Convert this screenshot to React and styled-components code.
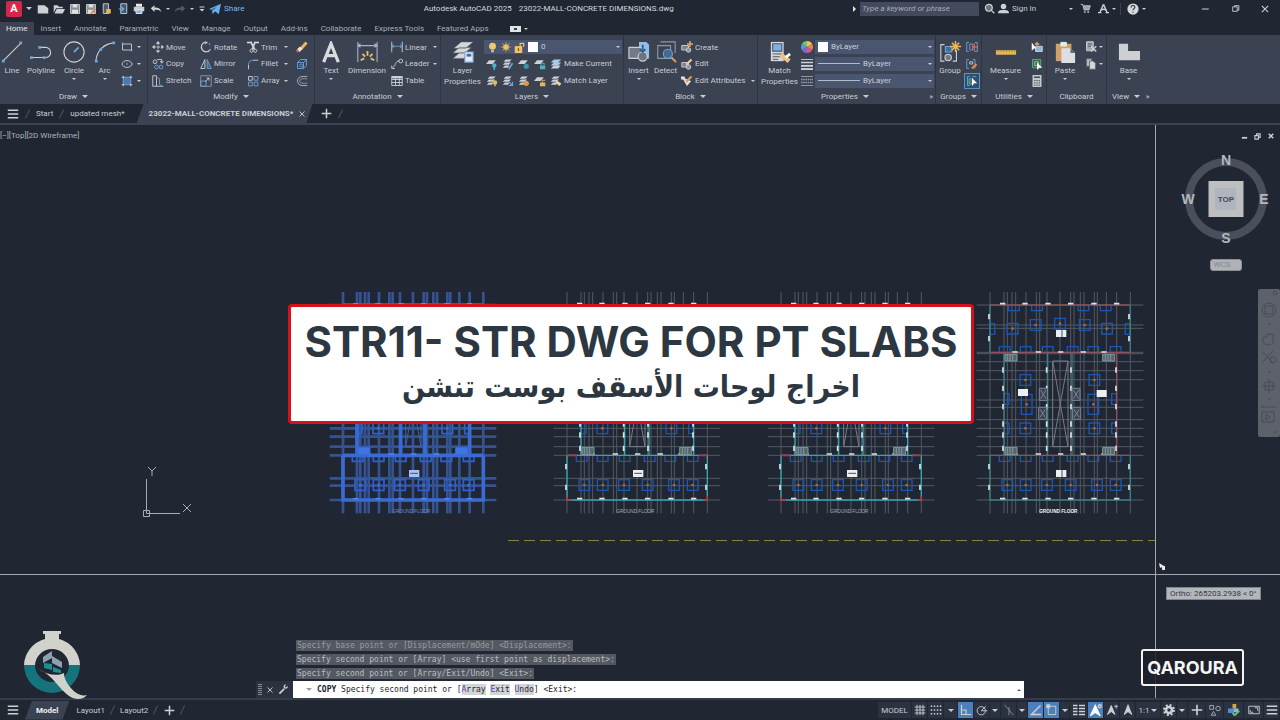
import React, { Component } from 'react'
import styled, { createGlobalStyle, css } from 'styled-components'

const colorBack = '#202732'
const colorPanel = '#3b4252'
const colorField = '#4a5670'
const colorText = '#c9cdd5'
const colorLight = '#cdd0d4'
const colorBlue = '#6ea4d8'
const colorYellow = '#e8b95c'
const fontPrimary = "Roboto, 'Noto Sans', sans-serif"
const fontHeading = "Inter, 'Open Sans', sans-serif"
const fontCommand = "'DejaVu Sans Mono', 'Liberation Mono', monospace"

const GlobalStyle = createGlobalStyle`
  * {
    box-sizing: border-box;
  }
  body {
    margin: 0;
    background: ${colorBack};
    color: ${colorText};
    font-family: ${fontPrimary};
    font-size: 8px;
    line-height: 11px;
  }
  button, input, select {
    margin: 0;
    padding: 0;
    border: 0;
    background: none;
    color: inherit;
    font: inherit;
  }
`

const Page = styled.div`
  display: flex;
  flex-direction: column;
  min-height: 100vh;
  overflow: hidden;
`

/* ---------- icons ---------- */

const Svg = styled.svg`
  display: block;
  flex: none;
  width: ${p => p.$size}px;
  height: ${p => p.$size}px;
  fill: none;
  stroke: ${colorLight};
  stroke-width: 1.2;
`

const sheets = (
  <g fill={colorLight} stroke='none'>
    <path d='M5 2h8l-3 3H2z' />
    <path d='M4 6h8l-3 3H1z' />
    <path d='M4 10h6l-2 3H1z' />
  </g>
)

const sheet = <path d='M4 3h9l-4 5H0z' fill={colorLight} stroke='none' />

const smallIcons = {
  file: <path d='M1 3h9l5 4v7H1z' fill={colorLight} stroke='none' />,
  open: (
    <g fill={colorLight} stroke='none'>
      <path d='M1 3h5l2 2h5v2H4l-3 6z' />
      <path d='M5 8h11l-3 6H2z' />
    </g>
  ),
  save: (
    <g>
      <path d='M2 2h12v12H2z' fill='#8b9098' />
      <path d='M5 2h6v4H5zM4 9h8v5H4z' fill='#dfe1e4' stroke='none' />
    </g>
  ),
  saveAs: (
    <g>
      <path d='M2 2h12v12H2z' fill='#8b9098' />
      <path d='M5 2h6v4H5zM4 9h8v5H4z' fill='#dfe1e4' stroke='none' />
      <path d='M8 14l6-6' stroke='#e08a4c' strokeWidth='2.4' />
    </g>
  ),
  webOpen: (
    <g>
      <path d='M3 1h7v13H3z' fill='#555b66' />
      <path d='M7 8h6v6H7z' fill={colorYellow} stroke='none' />
    </g>
  ),
  webSave: (
    <g>
      <path d='M5 1h8v13H5z' fill='#3c5878' />
      <path d='M2 8h7M6 5l3 3-3 3' stroke={colorBlue} strokeWidth='1.6' />
    </g>
  ),
  print: (
    <g>
      <path d='M4 1h8v4H4z' fill='#e6e8ea' stroke='none' />
      <path d='M1 5h14v6H1z' fill='#c9ccd1' stroke='none' />
      <path d='M4 9h8v5H4z' fill='#8fb8dc' stroke='#e6e8ea' />
    </g>
  ),
  undo: (
    <path
      d='M1 7l5-4v3c5 0 8 1 9 6-2-3-5-3-9-3v3z'
      fill={colorLight}
      stroke='none'
    />
  ),
  redo: (
    <path
      d='M15 7l-5-4v3c-5 0-8 1-9 6 2-3 5-3 9-3v3z'
      fill='#555c68'
      stroke='none'
    />
  ),
  overflow: (
    <g>
      <path d='M3 4h10' strokeWidth='2' />
      <path d='M3 8h10l-5 5z' fill={colorLight} stroke='none' />
    </g>
  ),
  plane: (
    <path
      d='M0 8L16 1l-3 14-5-4-3 4-1-5 7-5-8 4z'
      fill='#63b3ea'
      stroke='none'
    />
  ),
  search: (
    <g strokeWidth='1.8'>
      <circle cx='7' cy='7' r='5' fill='#6d7480' />
      <path d='M10 10l5 5' />
    </g>
  ),
  user: (
    <g fill={colorLight} stroke='none'>
      <circle cx='8' cy='5' r='4' />
      <path d='M0 15c0-5 4-5 8-5s8 0 8 5z' />
    </g>
  ),
  cart: (
    <g>
      <path d='M1 2h3l2 8h7l2-6H5' fill='#9aa0aa' />
      <circle cx='7' cy='13' r='1' />
      <circle cx='12' cy='13' r='1' />
    </g>
  ),
  apps: (
    <g strokeWidth='2'>
      <path d='M8 2l5 11M8 2L3 13M4 11c3-3 5-3 8 0' />
      <path d='M0 14h5M11 14h5' />
    </g>
  ),
  help: (
    <g>
      <circle cx='8' cy='8' r='7.5' fill='#d5d7da' stroke='none' />
      <path d='M5.500 6c0-4 5-3 5-.5 0 2-2.500 2-2.500 4M8 11.500v1.500' stroke='#2a303c' strokeWidth='1.500' />
    </g>
  ),
  minimize: <path d='M3 8h11' strokeWidth='1.600' />,
  restore: <path d='M3 5h8v8H3zM6 5V3h8v8h-3' strokeWidth='1.600' />,
  close: <path d='M3 3l10 10M13 3L3 13' strokeWidth='1.800' />,
  minimizeBold: <path d='M2 11h12' strokeWidth='4' />,
  restoreBold: <path d='M2 6h8v8H2zM6 5V2h8v8h-3' strokeWidth='2.500' />,
  closeBold: <path d='M2 2l12 12M14 2L2 14' strokeWidth='4' />,
  menu: <path d='M1 3h14M1 8h14M1 13h14' strokeWidth='1.800' />,
  plus: <path d='M8 1v14M1 8h14' strokeWidth='2.200' />,
  rect: (
    <g>
      <path d='M2 4h12v8H2z' />
      <path d='M1 3h2M13 13h2' stroke={colorBlue} strokeWidth='2' />
    </g>
  ),
  ellipse: (
    <g>
      <ellipse cx='8' cy='8' rx='6.500' ry='4.500' />
      <path d='M7 8h2M13.500 8h2' stroke={colorBlue} strokeWidth='2' />
    </g>
  ),
  hatch: (
    <g>
      <path d='M3 3h10v10H3z' fill='#4f78aa' stroke='#7aa6d6' />
      <path d='M1 3h3M12 3h3M1 13h3M12 13h3M3 1v3M13 1v3M3 12v3M13 12v3' />
    </g>
  ),
  move: (
    <g>
      <path d='M8 2v12M2 8h12' strokeDasharray='4 1' />
      <path d='M8 0l3 3.500H5zM8 16l3-3.500H5zM0 8l3.500-3v6zM16 8l-3.500-3v6z' fill={colorLight} stroke='none' />
    </g>
  ),
  copy: (
    <g>
      <circle cx='4' cy='5' r='2.500' />
      <path d='M7 2h6v4' />
      <path d='M11 4l2 3 2-3' />
      <circle cx='6' cy='12' r='2.500' stroke={colorBlue} />
      <circle cx='12' cy='12' r='2.500' stroke={colorBlue} />
    </g>
  ),
  stretch: (
    <g>
      <path d='M6 15H1V1h5v14h9' />
      <path d='M6 3l4 2v8l4 2' stroke={colorBlue} />
    </g>
  ),
  rotate: (
    <g strokeWidth='1.600'>
      <path d='M7 1.500A6.500 6.500 0 1 0 14 11' />
      <path d='M8 2c4 0 6 3 6 5' stroke={colorBlue} strokeDasharray='2 2' />
      <path d='M7 0v5l3-3z' fill={colorLight} stroke='none' />
    </g>
  ),
  mirror: (
    <g>
      <path d='M6.500 2v12H1z' />
      <path d='M9.500 2v12H15z' fill='#3f6590' stroke={colorBlue} />
    </g>
  ),
  scale: (
    <g>
      <path d='M1 1h14v14H1z' stroke='#8f98a8' />
      <path d='M1 8h7v7H1z' stroke={colorBlue} />
      <path d='M7 9l5-5M8.500 4H12v3.500' />
    </g>
  ),
  trim: (
    <g>
      <path d='M0 2h6M10 2h6' stroke='#e0e2e5' strokeWidth='2' />
      <path d='M5 1l5 10M11 1L7 11' strokeWidth='2.400' />
      <circle cx='6' cy='13' r='2' />
      <circle cx='11' cy='13' r='2' />
    </g>
  ),
  fillet: (
    <g>
      <path d='M2 15V9' />
      <path d='M2 9c0-4 3-6 6-6' stroke={colorBlue} />
      <path d='M8 3h7' />
    </g>
  ),
  array: (
    <g>
      <path d='M2 2h5v5H2z' />
      <path d='M9.500 2h5v5h-5zM2 9.500h5v5H2zM9.500 9.500h5v5h-5z' stroke={colorBlue} />
    </g>
  ),
  erase: (
    <g>
      <path d='M7 10l7-8' stroke={colorYellow} strokeWidth='4' />
      <path d='M3 13l4-4' stroke='#f2e6e0' strokeWidth='5' />
      <path d='M1 14l2-2' stroke='#d9655a' strokeWidth='4' />
    </g>
  ),
  explode: (
    <g stroke={colorBlue}>
      <path d='M2 6h8v8H2zM2 6l4-4h8v8l-4 4M10 6l4-4' />
      <circle cx='7' cy='10' r='2' />
    </g>
  ),
  offset: (
    <g>
      <path d='M15 2H8a6 6 0 0 0 0 12h7' stroke='#a9b6cc' />
      <path d='M15 5H8a3 3 0 0 0 0 6h7' stroke='#8f98a8' />
    </g>
  ),
  linear: (
    <g>
      <path d='M1 1v14M15 1v14' />
      <path d='M1 7h14M4 5L1 7l3 2M12 5l3 2-3 2' stroke={colorBlue} />
    </g>
  ),
  leader: (
    <g>
      <circle cx='13' cy='4' r='2.500' />
      <path d='M11 4c-6 0-4 6-9 9M1 10v4h4' />
    </g>
  ),
  table: (
    <g>
      <path d='M1 2h14v12H1zM1 6h14M1 10h14M6 4v10M11 4v10' />
      <path d='M1 3h14' strokeWidth='3' />
    </g>
  ),
  layerOff: <g>{sheet}<circle cx='11' cy='10' r='3' fill='#4db3c0' stroke='none' /><path d='M11 12v4' stroke='#4db3c0' strokeWidth='2' /></g>,
  layerIso: <g>{sheets}<path d='M9 15l5-8' stroke={colorBlue} strokeWidth='2' /></g>,
  layerFreeze: <g>{sheet}<circle cx='11' cy='11' r='3.500' fill='#3c96a4' stroke='none' /></g>,
  layerLock: <g>{sheet}<path d='M8 10h7v5H8z' fill='#4db3c0' stroke='none' /><path d='M9.500 10V7h4v3' stroke='#4db3c0' /></g>,
  layerCurrent: <g><path d='M5 2h10l-4 4H1zM5 6h10l-4 4H1z' fill='#a9c9e8' stroke='none' /><path d='M5 10h9l-3 4H1z' fill={colorLight} stroke='none' /></g>,
  layerOn: <g>{sheets}<circle cx='12' cy='10' r='3' fill={colorYellow} stroke='none' /><path d='M12 12v3' stroke={colorYellow} strokeWidth='2' /></g>,
  layerUniso: <g>{sheets}<path d='M9 9l5 5M14 9v5H9' stroke={colorBlue} strokeWidth='1.600' /></g>,
  layerThaw: <g>{sheets}<circle cx='11' cy='11' r='3.500' fill='#d99b45' stroke='none' /></g>,
  layerUnlock: <g>{sheet}<path d='M8 10h7v5H8z' fill={colorYellow} stroke='none' /><path d='M11 10V7h4' stroke={colorYellow} /></g>,
  layerMatch: <g>{sheets}<path d='M8 9l6 4' stroke='#e8cfae' strokeWidth='4' /></g>,
  bulb: (
    <g stroke='none'>
      <circle cx='8' cy='6' r='5' fill='#f0c96c' />
      <path d='M6 11h4v4H6z' fill='#b9bcc2' />
    </g>
  ),
  sun: (
    <g>
      <path d='M8 0v16M0 8h16M2 2l12 12M14 2L2 14' stroke={colorYellow} />
      <circle cx='8' cy='8' r='4.500' fill='#f0c060' stroke='none' />
    </g>
  ),
  padlock: (
    <g>
      <path d='M1 6h11v10H1z' fill='#edc06a' stroke='none' />
      <path d='M9 7V2h5v5' stroke='#edc06a' strokeWidth='1.800' />
      <path d='M6.500 9v4' stroke='#5a4a20' strokeWidth='1.600' />
    </g>
  ),
  create: (
    <g>
      <path d='M1 6h9v6H1z' fill='#7b828e' />
      <circle cx='10' cy='12' r='3' fill='#8b929e' />
      <path d='M12 0v8M8 4h8' stroke='#e8a860' strokeWidth='2' />
    </g>
  ),
  editBlock: (
    <g>
      <path d='M1 6h9v6H1z' fill='#7b828e' />
      <circle cx='10' cy='12' r='3' fill='#8b929e' />
      <path d='M7 9l7-7' stroke='#e6c9a0' strokeWidth='3' />
    </g>
  ),
  attributes: (
    <g>
      <path d='M2 3l6 11 5-6' fill='#dfe1e4' stroke='#dfe1e4' />
      <path d='M7 9l7-7' stroke='#e09a4c' strokeWidth='3' />
      <path d='M0 2h5v4H0z' fill='#dfe1e4' stroke='none' />
    </g>
  ),
  wheel: (
    <g stroke='none'>
      <path d='M8 8V0a8 8 0 0 1 7 4z' fill='#e9c65a' />
      <path d='M8 8l7-4a8 8 0 0 1 0 8z' fill='#e8824c' />
      <path d='M8 8l7 4a8 8 0 0 1-7 4z' fill='#d8548c' />
      <path d='M8 8v8a8 8 0 0 1-7-4z' fill='#8a62cc' />
      <path d='M8 8l-7 4a8 8 0 0 1 0-8z' fill='#4f9be0' />
      <path d='M8 8L1 4a8 8 0 0 1 7-4z' fill='#6cc070' />
    </g>
  ),
  weight: (
    <g>
      <path d='M0 2h16' />
      <path d='M0 6h16' strokeWidth='2' />
      <path d='M0 10.500h16' strokeWidth='2.500' />
      <path d='M0 15h16' strokeWidth='3' />
    </g>
  ),
  linetype: (
    <g stroke='#9aa0aa'>
      <path d='M0 2h16M0 14h16' />
      <path d='M0 6h16M0 10h16' strokeDasharray='2 1' strokeWidth='2' />
    </g>
  ),
  ungroup: (
    <g>
      <path d='M4 2H1v12h3M12 2h3v12h-3' stroke={colorBlue} />
      <path d='M5 4h4v8H5z' stroke={colorBlue} />
      <path d='M8 8h8M11 3v11' stroke='#d9605c' strokeWidth='1.800' />
    </g>
  ),
  groupEdit: (
    <g>
      <path d='M4 2H1v12h3M9 2h3v12' stroke={colorBlue} />
      <path d='M5 5h4v3H5z' />
      <path d='M8 14l6-6' stroke='#e08a4c' strokeWidth='3' />
    </g>
  ),
  groupSelect: (
    <g>
      <path d='M5 2H2v12h3M9 2h4' stroke={colorBlue} />
      <path d='M4 5h5v7H4z' fill='#3f8060' stroke='#62b088' />
      <path d='M8 4l7 7h-4l-3 4z' fill='#fff' stroke='none' />
    </g>
  ),
  quickSelect: (
    <g>
      <path d='M6 7h9v7H6z' fill='#8fb8dc' />
      <path d='M1 2l6 8H4l-3 3z' fill='#fff' stroke='none' />
      <path d='M8 1v5M5 4h6' stroke='#e8a860' strokeWidth='1.800' />
    </g>
  ),
  selectAll: (
    <g>
      <path d='M2 2h11v11H2z' fill='#2f6a50' stroke='#5cae84' />
      <path d='M5 5h5v5H5z' stroke='#8fd4b0' />
      <path d='M8 6l7 7h-4l-3 3z' fill='#fff' stroke='none' />
    </g>
  ),
  calculator: (
    <g>
      <path d='M2 0h12v16H2z' fill='#c4c7cc' stroke='none' />
      <path d='M4 3h8' stroke='#454b58' strokeWidth='2' />
      <path d='M4 7.500h8M4 10.500h8M4 13.500h8' stroke='#454b58' strokeDasharray='2 1' />
    </g>
  ),
  cut: (
    <g>
      <path d='M2 1h9v12H2z' fill='#a5a9b1' />
      <path d='M4 4h5M4 7h5' stroke='#454b58' />
      <path d='M8 7l7 7M15 7l-7 7' strokeWidth='1.800' />
    </g>
  ),
  pages: (
    <g stroke='#60666f'>
      <path d='M2 1h7v10H2z' fill='#b9bcc2' />
      <path d='M6 4h5l3 3v8H6z' fill='#d5d7da' />
    </g>
  ),
  wrench: (
    <g>
      <path d='M2 14l7-7' strokeWidth='2.500' />
      <path d='M14 3l-3 2-1-2 2-2c-4-1-5 3-3 5s6 1 5-3z' fill={colorLight} stroke='none' />
    </g>
  ),
  grid: <path d='M4 1v14M8 1v14M12 1v14M1 4h14M1 8h14M1 12h14' />,
  dots: <path d='M1 3h14M1 8h14M1 13h14' strokeDasharray='2 2' strokeWidth='1.800' />,
  ortho: <path d='M2 1v13h13M2 8h6v6' strokeWidth='1.600' />,
  polar: (
    <g>
      <circle cx='7' cy='9' r='5.500' />
      <path d='M7 9h8M7 9l6-6' />
    </g>
  ),
  iso: <path d='M2 1l12 14M8 4v11' stroke='#8a909a' />,
  track: <path d='M14 2L2 14h13' strokeWidth='1.800' />,
  snap: (
    <g>
      <path d='M3 3h10v11H3z' />
      <path d='M1 1h4v4H1z' fill={colorLight} />
    </g>
  ),
  lines: <path d='M0 2h6M8 2h8M0 6h6M8 6h8M0 10h6M8 10h8M0 14h6M8 14h8' strokeWidth='2' />,
  anno: <path d='M8 1l5 13-5-4-5 4zM8 4v7' fill={colorLight} />,
  annoOn: (
    <g strokeWidth='1.800'>
      <path d='M7 2l6 13-6-4-6 4z' fill='#fff' stroke='#fff' />
      <circle cx='13' cy='3' r='2' />
    </g>
  ),
  annoAuto: (
    <g>
      <path d='M7 2l5 12-5-4-5 4z' fill={colorLight} />
      <path d='M11 3h5M13.500 1v5' />
    </g>
  ),
  gear: (
    <g>
      <circle cx='8' cy='8' r='6.500' strokeWidth='3' strokeDasharray='2.600 2.500' />
      <circle cx='8' cy='8' r='4' strokeWidth='3.500' />
    </g>
  ),
  shapes: (
    <g stroke='#aab0ba'>
      <path d='M1 2h5v5H1z' />
      <circle cx='12' cy='6' r='3' />
      <path d='M6 10l3 5H3z' />
    </g>
  ),
  cubes: (
    <g stroke='none'>
      <path d='M6 0h5v6H6z' fill='#d9a24c' />
      <path d='M0 6h8v6H0z' fill='#4f8fd4' />
      <path d='M8 6h6v5H8z' fill='#8fb8dc' />
      <path d='M6 12l3 3 6-6' stroke='#6cc070' strokeWidth='2.500' />
    </g>
  ),
  fullscreen: (
    <g>
      <path d='M1 3h14v10H1z' />
      <path d='M9 5h4v4M7 11H3V8' />
    </g>
  )
}

const bigIcons = {
  line: <g><path d='M2 22L22 2' /><path d='M1 22h3M20 2h3' stroke={colorBlue} strokeWidth='3' /></g>,
  polyline: <g><path d='M1 18h15M10 7h7a5.500 5.500 0 0 1 0 11' /><path d='M0 18h3M14 18h3M9 7h3' stroke={colorBlue} strokeWidth='3' /></g>,
  circle: <g><circle cx='12' cy='12' r='11' /><path d='M12 12l5-5' stroke={colorBlue} strokeWidth='2' /></g>,
  arc: <g><path d='M2 22C3 11 10 3 22 2' /><path d='M1 22h3M6 9h3M20 2h3' stroke={colorBlue} strokeWidth='3' /></g>,
  text: <path d='M4 23L12 3l8 20M7 16h10' strokeWidth='3.500' stroke='#d9dbde' />,
  dimension: (
    <g>
      <path d='M2 1v22M23 1v22M2 5h21M5 3L2 5l3 2M20 3l3 2-3 2' stroke='#a8b4c6' />
      <path d='M5 21l4-2M7 14l3 3M12.500 11v5M18 14l-3 3M20 21l-4-2' stroke='#e0c06a' strokeWidth='2' />
    </g>
  ),
  layers: (
    <g>
      <path d='M10 1h13l-8 7H2zM8 7h13l-7 6H1zM8 13h10l-5 6H1z' fill='#d5d7da' stroke='#5a616e' strokeWidth='.600' />
      <path d='M14 12h9v11h-9z' fill='#e9ebee' stroke='#7aa6d6' />
      <path d='M16 14h5v3h-5z' fill='#3c6ea8' stroke='none' />
    </g>
  ),
  insert: (
    <g>
      <path d='M12 1h8l3 3v15H12z' fill='#8cc0ea' stroke='none' />
      <path d='M1 7h14v12H1z' fill='#737a87' />
      <circle cx='16' cy='17' r='5' fill='#6d7480' />
      <path d='M16 4v8M13 9l3 3 3-3' stroke='#2f5f92' strokeWidth='2' />
    </g>
  ),
  detect: (
    <g>
      <path d='M6 1h16v12M3 5h14v14H3z' stroke='#8f98a8' />
      <circle cx='14' cy='14' r='5' fill='#46698f' stroke={colorBlue} />
      <path d='M18 18l5 5' stroke='#e0a35c' strokeWidth='2' />
    </g>
  ),
  match: (
    <g>
      <path d='M2 1h14v21H2z' fill='#d5d7da' stroke='none' />
      <path d='M4 3h10v8H4z' fill='#7fb2e0' stroke='#4a5670' />
      <path d='M4 14h10M4 17h9M4 20h6' stroke='#6d7480' />
      <path d='M13 15l9 7' stroke='#efc27a' strokeWidth='5' />
      <path d='M18 18l5-4' stroke='#fff' strokeWidth='3' />
    </g>
  ),
  group: (
    <g>
      <path d='M6 4H2v18h4M15 22h4V10' />
      <path d='M7 6h7v6H7z' fill='#416c9c' stroke={colorBlue} />
      <circle cx='10' cy='18' r='3.500' fill='#737a87' />
      <path d='M18 0v12M12 6h12M14 2l8 8M22 2l-8 8' stroke='#edb95c' strokeWidth='1.600' />
    </g>
  ),
  measure: <g><path d='M1 10h22v5H1z' fill='#e2b75a' stroke='none' /><path d='M3 11h19' stroke='#8d7030' strokeDasharray='1 2' /></g>,
  paste: (
    <g stroke='none'>
      <path d='M2 3h17v19H2z' fill='#d0a268' />
      <path d='M7 1h7v5H7z' fill='#e6e8ea' />
      <path d='M8 8h10l5 5v11H8z' fill='#dcdee1' />
      <path d='M18 8v5h5z' fill='#60666f' />
    </g>
  ),
  base: <path d='M1 3h10v8h13v10H1z' fill='#cdcfd3' stroke='none' />
}

const Icon = ({ name, size = 12 }) => (
  <Svg $size={size} viewBox='0 0 16 16' aria-hidden='true'>
    {smallIcons[name]}
  </Svg>
)

const BigIcon = ({ name }) => (
  <Svg $size={22} viewBox='0 0 24 24' aria-hidden='true'>
    {bigIcons[name]}
  </Svg>
)

const Caret = styled.span`
  flex: none;
  width: 0;
  height: 0;
  margin-left: ${p => (p.$push ? 'auto' : 0)};
  border: ${p => (p.$large ? 3 : 2)}px solid transparent;
  border-top-color: ${colorText};
  border-bottom: 0;
`

const Slash = styled.span`
  flex: none;
  width: 1px;
  height: 10px;
  background: #4a5160;
  transform: rotate(25deg);
`

/* ---------- title bar ---------- */

const TitleBar = styled.header`
  display: flex;
  align-items: center;
  height: 22px;
  padding: 0 7px 5px 6px;
`

const AppButton = styled.button`
  width: 16px;
  height: 16px;
  border-radius: 2px;
  background: #d7264c;
  color: #fff;
  font-size: 11px;
  font-weight: 700;
  line-height: 14px;
`

const Tool = styled.button`
  display: flex;
  flex: none;
  align-items: center;
  justify-content: center;
  gap: 3px;
  width: ${p => (p.$width ? p.$width + 'px' : 'auto')};
  height: 16px;
  white-space: nowrap;
  color: ${p => (p.$blue ? '#7fb6e0' : 'inherit')};
`

const Title = styled.h1`
  display: flex;
  flex: 1;
  justify-content: center;
  gap: 7px;
  margin: 0;
  font-size: 8px;
  font-weight: 400;
  white-space: nowrap;
  color: #d5d7db;
`

const Next = styled.span`
  width: 0;
  border: 3px solid transparent;
  border-left-color: #e1e3e6;
  border-right: 0;
`

const Search = styled.input`
  width: 119px;
  height: 14px;
  margin: 0 1px 0 4px;
  padding-left: 2px;
  background: #424a5b;
  font-style: italic;
  &::placeholder {
    color: #a7acb7;
    opacity: 1;
  }
`

const Divider = styled.span`
  width: 1px;
  height: 12px;
  margin: 0 3px;
  background: #3a4150;
`

const WindowButtons = styled.div`
  display: flex;
  gap: 14px;
  margin-left: 49px;
`

/* ---------- ribbon ---------- */

const RibbonTabs = styled.nav`
  display: flex;
  gap: 1px;
  height: 13px;
`

const RibbonTab = styled.button`
  padding: 0 6px;
  line-height: 13px;
  white-space: nowrap;
  background: ${p => (p.$active ? colorPanel : 'none')};
  color: ${p => (p.$active ? '#e3e5e9' : '#a9aeb8')};
`

const Featured = styled.button`
  display: flex;
  align-items: center;
  gap: 3px;
  margin-left: 14px;
`

const FeaturedBox = styled.span`
  display: flex;
  align-items: center;
  justify-content: center;
  width: 11px;
  height: 6px;
  background: #e1e3e6;
  &::after {
    content: '';
    width: 3px;
    height: 2px;
    background: #39404e;
  }
`

const Ribbon = styled.section`
  display: flex;
  height: 69px;
  background: ${colorPanel};
`

const Panel = styled.div`
  display: flex;
  flex: none;
  flex-direction: column;
  width: ${p => p.$width}px;
  padding-top: 4px;
  border-right: 1px solid ${p => (p.$last ? colorPanel : '#2e3543')};
`

const Tools = styled.div`
  display: flex;
  height: 50px;
`

const PanelTitle = styled.div`
  display: flex;
  align-items: center;
  justify-content: ${p => (p.$indent ? 'flex-start' : 'center')};
  gap: 5px;
  height: 15px;
  padding-left: ${p => p.$indent || 0}px;
`

const Launcher = styled.button`
  width: 8px;
  margin-left: auto;
`

const Big = styled.button`
  display: flex;
  flex: none;
  flex-direction: column;
  align-items: center;
  width: ${p => p.$width}px;
  padding-top: 2px;
`

const Label = styled.span`
  margin: 2px 0;
  text-align: center;
  white-space: nowrap;
`

const Columns = styled.div`
  display: grid;
  flex: 1;
  grid-template-columns: ${p => p.$columns};
  grid-template-rows: repeat(3, 1fr);
  align-items: center;
  padding: 0 1px 0 ${p => p.$left || 0}px;
`

const Small = styled.button`
  display: grid;
  grid-template-columns: 16px ${p => (p.$text ? p.$text + 'px' : 'auto')} auto;
  align-items: center;
  justify-content: start;
  justify-items: start;
  height: 16px;
  text-align: left;
  white-space: nowrap;
  > svg {
    justify-self: center;
  }
  ${p =>
    p.$active &&
    css`
      background: #2d4f70;
      outline: 1px solid #5a92c4;
      outline-offset: -1px;
    `}
`

const Stack = styled.div`
  display: grid;
  flex: 1;
  grid-template-rows: repeat(3, 1fr);
  align-items: center;
  padding-right: 1px;
`

const IconRow = styled.div`
  display: flex;
`

const Combo = styled.label`
  display: flex;
  align-items: center;
  gap: 3px;
  height: 14px;
  padding: 0 2px 0 3px;
  background: ${colorField};
`

const Swatch = styled.span`
  width: 10px;
  height: 10px;
  background: #fff;
`

const Rule = styled.span`
  width: 42px;
  height: 1px;
  background: #b4bac6;
`

const Select = styled.select`
  flex: 1;
  min-width: 0;
  appearance: none;
  line-height: 12px;
`

/* ---------- drawing tabs ---------- */

const FileTabs = styled.nav`
  display: flex;
  align-items: center;
  gap: 8px;
  height: 21px;
  padding-left: 7px;
  border-bottom: 2px solid ${colorPanel};
`

const FileTab = styled.button`
  white-space: nowrap;
`

const ActiveFile = styled.div`
  display: flex;
  align-items: center;
  gap: 4px;
  height: 19px;
  margin-left: 4px;
  padding: 0 5px 0 12px;
  background: ${colorPanel};
  clip-path: polygon(7px 0, 100% 0, calc(100% - 6px) 100%, 0 100%);
  font-weight: 700;
`

/* ---------- model space ---------- */

const Space = styled.main`
  position: relative;
  display: flex;
  flex: 1;
  flex-direction: column;
  justify-content: space-between;
  min-height: 573px;
`

const ViewLabel = styled.div`
  padding-top: 5px;
  color: #b0b5be;
`

const PlanBox = styled.div`
  position: absolute;
  top: 155px;
  left: ${p => p.$left}px;
  width: 180px;
  height: 245px;
  > svg {
    display: block;
  }
`

const Crosshair = styled.div`
  position: absolute;
  background: #a3a7ae;
  ${p =>
    p.$vertical
      ? css`
          top: 0;
          bottom: 0;
          left: 1155px;
          width: 1px;
        `
      : css`
          top: 449px;
          left: 0;
          right: 0;
          height: 1px;
        `}
`

const Dashes = styled.div`
  position: absolute;
  top: 415px;
  left: 508px;
  width: 647px;
  height: 1px;
  background: repeating-linear-gradient(90deg, #8f7f48 0 11px, transparent 11px 16px);
`

const Ucs = styled.svg`
  position: absolute;
  top: 338px;
  left: 140px;
  fill: none;
  stroke: #a6abb4;
`

const Pointer = styled.svg`
  position: absolute;
  top: 437px;
  left: 1158px;
`

const Tip = styled.div`
  position: absolute;
  top: 462px;
  left: 1166px;
  padding: 0 3px;
  border: 1px solid #7e838c;
  background: #b3b6bb;
  color: #343a46;
  white-space: nowrap;
`

const Banner = styled.section`
  position: absolute;
  top: 179px;
  left: 288px;
  width: 686px;
  height: 120px;
  padding-top: 10px;
  border: 3px solid #d5121b;
  border-radius: 4px;
  background: #fff;
  color: #2c3742;
  text-align: center;
  white-space: nowrap;
  > h2 {
    margin: 0;
    font-family: ${fontHeading};
    font-size: 42px;
    font-weight: 700;
    line-height: 50px;
  }
  > p {
    margin: 0;
    font-family: 'DejaVu Sans Condensed', 'DejaVu Sans', sans-serif;
    font-size: 30px;
    font-weight: 700;
    line-height: 40px;
  }
`

const SpaceButtons = styled.div`
  position: absolute;
  top: 3px;
  right: 5px;
  display: flex;
  gap: 4px;
`

const Compass = styled.div`
  position: absolute;
  top: 28px;
  right: 8px;
  display: flex;
  flex-direction: column;
  align-items: center;
  gap: 14px;
`

const Wcs = styled.button`
  width: 32px;
  height: 12px;
  padding-right: 8px;
  border: 1px solid #8d9098;
  border-radius: 3px;
  background: #b0b2b8;
  color: #81858e;
  line-height: 10px;
`

const NavBar = styled.div`
  position: absolute;
  top: 164px;
  right: 0;
  width: 22px;
  height: 148px;
  border-radius: 2px;
  background: #5d626a;
  > svg {
    display: block;
  }
`

const Logo = styled.svg`
  position: absolute;
  bottom: -2px;
  left: 23px;
`

const Brand = styled.div`
  position: absolute;
  right: 36px;
  bottom: 12px;
  padding: 0 4px;
  border: 2px solid #f1f2f4;
  border-radius: 3px;
  background: rgba(29, 32, 39, 0.85);
  color: #f4f5f6;
  font-family: ${fontHeading};
  font-size: 18px;
  font-weight: 700;
  line-height: 33px;
`

/* ---------- command line ---------- */

const Command = styled.section`
  position: relative;
  width: 60%;
  margin-left: 256px;
  font-family: ${fontCommand};
`

const History = styled.div`
  display: flex;
  flex-direction: column;
  align-items: flex-start;
  gap: 3px;
  padding: 0 0 2px 40px;
  > span {
    padding: 0 1px;
    background: #545961;
    color: #b9bcc2;
    white-space: pre;
  }
  > span:first-child {
    color: #979ba2;
  }
`

const Prompt = styled.div`
  display: flex;
  align-items: center;
  gap: 4px;
  height: 17px;
  padding-left: 2px;
  background: #2b3240;
`

const Grip = styled.span`
  width: 4px;
  height: 12px;
  background: repeating-linear-gradient(#868c97 0 1px, transparent 1px 2px);
`

const Field = styled.div`
  display: flex;
  flex: 1;
  align-items: center;
  height: 17px;
  padding: 0 3px 0 13px;
  background: #fff;
  color: #20242c;
  white-space: pre;
  > ${Caret} {
    margin-right: 5px;
    border-top-color: #9a9ea6;
  }
  > input {
    flex: 1;
    min-width: 0;
  }
`

const Option = styled.button`
  background: #d3d4d8;
  &::first-letter {
    color: #5540c8;
  }
`

const Up = styled.span`
  border: 2px solid transparent;
  border-top: 0;
  border-bottom-color: #5a5f6a;
`

/* ---------- status bar ---------- */

const StatusBar = styled.footer`
  display: flex;
  align-items: center;
  height: 22px;
  padding-left: 7px;
  border-top: 2px solid #353c4a;
`

const Layouts = styled.nav`
  display: flex;
  flex: 1;
  align-items: center;
  gap: 7px;
`

const LayoutTab = styled.button`
  white-space: nowrap;
  ${p =>
    p.$active &&
    css`
      height: 19px;
      padding: 0 11px;
      background: ${colorPanel};
      clip-path: polygon(7px 0, 100% 0, calc(100% - 7px) 100%, 0 100%);
      color: #f0f1f3;
      font-weight: 700;
    `}
`

const Toggle = styled.button`
  display: flex;
  flex: none;
  align-items: center;
  justify-content: center;
  width: ${p => p.$width || 16}px;
  height: 16px;
  border-right: 1px solid ${colorBack};
  background: ${p => (p.$on ? '#4c80bd' : '#2b3240')};
`

const verticals = [60, 102, 112, 126, 137, 168, 199, 209, 231, 270, 302, 312, 331, 342, 373, 382, 409, 440, 481]
const horizontals = [75, 135, 145, 217, 221, 245, 272, 299, 360, 382, 419, 445, 470, 500, 526, 595, 617, 660]
const columnPads = [
  [197, 135], [270, 131], [344, 135], [128, 146], [411, 146],
  [166, 300], [373, 300], [166, 445], [373, 445],
  [112, 615], [167, 615], [231, 615], [302, 615], [381, 615], [437, 615]
]
const tallPads = [[170, 373], [370, 373]]
const upperPads = [[132, 75], [201, 75], [340, 75], [407, 75]]
const lowerPads = [[104, 526], [167, 526], [233, 526], [308, 526], [370, 526], [437, 526]]
const middlePads = [[104, 217], [167, 217], [233, 217], [308, 217], [370, 217], [437, 217]]
const sidePads = [[67, 147], [473, 147], [110, 357], [110, 445], [432, 357], [432, 445]]
const topMarks = [98, 165, 234, 302, 372, 440]
const sideMarks = [270, 325, 380, 432, 465, 505]

const Plan = ({ left, kind }) => {
  const selected = kind === 'selected'
  const wall = selected ? '#386bd4' : kind === 'red' ? '#35808a' : '#2fa8b0'
  const beam = selected ? '#386bd4' : kind === 'red' ? '#8f525c' : '#2fa8b0'
  const pad = selected ? '#2a62d0' : '#1c56b4'
  const grid = selected ? '#3d62b4' : '#535a64'
  const mark = selected ? '#6f96e4' : '#e0e3e6'
  return (
    <PlanBox $left={left}>
      <svg width='180' height='245' viewBox='0 0 540 735' fill='none'>
        <g stroke={grid} strokeWidth={selected ? 8 : 3} opacity={selected ? 0.75 : 1}>
          {verticals.map(x => <path key={x} d={`M${x} 36V700`} />)}
          {horizontals.map(y => <path key={y} d={`M20 ${y}H520`} />)}
        </g>
        <g stroke={pad} strokeWidth={selected ? 5 : 4}>
          {columnPads.map(([x, y]) => <path key={x + '-' + y} d={`M${x - 16} ${y - 16}h32v32h-32z`} />)}
          {tallPads.map(([x, y]) => <path key={x} d={`M${x - 16} ${y - 30}h32v60h-32z`} />)}
          {upperPads.map(([x, y]) => <path key={x} d={`M${x - 16} ${y}v17h32v-17`} />)}
          {middlePads.map(([x, y]) => <path key={x} d={`M${x - 16} ${y}v-17h32v17`} />)}
          {lowerPads.map(([x, y]) => <path key={x} d={`M${x - 16} ${y}v18h32v-18`} />)}
          {sidePads.map(([x, y]) => <path key={x + '-' + y} d={`M${x - 7} ${y - 16}h14v32h-14z`} />)}
        </g>
        <g fill={selected ? '#3d74e0' : '#8d6a78'}>
          {columnPads.concat(tallPads).map(([x, y]) => <circle key={x + '-' + y} cx={x} cy={y} r='4' />)}
        </g>
        <path d='M248 243h46v257h-46zM248 243l46 257M294 243l-46 257' stroke={selected ? grid : '#777c84'} strokeWidth='3' />
        <g stroke={wall} strokeWidth={selected ? 11 : 4}>
          <path d='M60 75V217M481 75V217M60 526V660H481V526M102 217V526M233 217V526M306 217V526' />
          <path d='M60 75H481M440 217V526M60 217H481M60 526H481' stroke={beam} />
        </g>
        {kind === 'plain' && (
          <path d='M60 526h30M455 526h26M60 650v10h14M470 660h11v-12' stroke='#c0313f' strokeWidth='5' />
        )}
        <g stroke={mark} strokeWidth={selected ? 3 : 5}>
          {topMarks.map(x => <path key={x} d={`M${x - 8} 71h16M${x - 8} 656h16`} />)}
          {[135, 205, 272, 340, 402].map(x => <path key={x} d={`M${x - 8} 216h16M${x - 8} 522h16`} />)}
          {!selected && sideMarks.map(y => (
            <path key={y} d={`M99 ${y - 8}v16M230 ${y - 8}v16M303 ${y - 8}v16M438 ${y - 8}v16`} />
          ))}
          {!selected && [110, 176, 560, 622].map(y => <path key={y} d={`M57 ${y - 8}v16M477 ${y - 8}v16`} />)}
        </g>
        <g fill={selected ? '#3f74e4' : '#59636c'} stroke={selected ? wall : '#7b9a9e'} strokeWidth='3'>
          <path d='M105 223h36v20h-36zM398 223h36v20h-36zM105 502h36v22h-36zM398 502h36v22h-36z' />
          {!selected && (
            <g>
              <path d='M112 223v20M120 223v20M128 223v20M406 223v20M414 223v20M422 223v20M112 502v22M120 502v22M128 502v22M406 502v22M414 502v22M422 502v22' />
              <path d='M208 325h24v36h-24zM306 325h24v36h-24zM206 382h24v36h-24zM308 382h24v36h-24z' stroke='#7c8494' fill='#3a4454' />
              <path d='M212 330l16 26M228 330l-16 26M310 330l16 26M326 330l-16 26M210 388l16 24M226 388l-16 24M312 388l16 24M328 388l-16 24' stroke='#7c8494' />
            </g>
          )}
        </g>
        <g fill={selected ? '#a9c2f4' : '#eceef0'}>
          <path d='M258 570h31v21h-31zM258 150h31v21h-31zM144 327h30v21h-30zM380 330h30v21h-30z' />
        </g>
        <path d={kind === 'red' ? 'M276 150v21M276 570v21' : 'M262 580h23'} stroke='#48505e' strokeWidth='3' />
        <text
          x='265'
          y='698'
          textAnchor='middle'
          fontFamily='Liberation Sans'
          fontSize='14'
          fontWeight={kind === 'red' ? 700 : 400}
          fill={selected ? '#6f8cc4' : kind === 'red' ? '#f2f3f4' : '#a9adb4'}
        >
          GROUND FLOOR
        </text>
      </svg>
    </PlanBox>
  )
}

const tabs = ['Home', 'Insert', 'Annotate', 'Parametric', 'View', 'Manage', 'Output', 'Add-ins', 'Collaborate', 'Express Tools', 'Featured Apps']

const quick = ['file', 'open', 'save', 'saveAs', 'webOpen', 'webSave', 'print']

const modify = [
  ['move', 'Move'], ['rotate', 'Rotate'], ['trim', 'Trim', 1], ['erase'],
  ['copy', 'Copy'], ['mirror', 'Mirror'], ['fillet', 'Fillet', 1], ['explode'],
  ['stretch', 'Stretch'], ['scale', 'Scale'], ['array', 'Array', 1], ['offset']
]

const layerRows = [
  ['layerOff', 'layerIso', 'layerFreeze', 'layerLock', 'layerCurrent', 'Make Current'],
  ['layerOn', 'layerUniso', 'layerThaw', 'layerUnlock', 'layerMatch', 'Match Layer']
]

const BigTool = ({ icon, label, more, width }) => (
  <Big $width={width}>
    <BigIcon name={icon} />
    <Label>
      {label.map((line, i) => (
        <React.Fragment key={line}>
          {i > 0 && <br />}
          {line}
        </React.Fragment>
      ))}
    </Label>
    {more && <Caret />}
  </Big>
)

const SmallTool = ({ icon, label, more, text, active }) => (
  <Small $text={text} $active={active} aria-label={label || icon}>
    <Icon name={icon} />
    {label && <span>{label}</span>}
    {more && <Caret />}
  </Small>
)

class Header extends Component {
  render () {
    return (
      <TitleBar>
        <AppButton>A</AppButton>
        <Tool $width={13} aria-label='Application menu'><Caret $large /></Tool>
        {quick.map(name => (
          <Tool key={name} $width={16} aria-label={name}><Icon name={name} /></Tool>
        ))}
        <Tool $width={18} aria-label='Undo'><Icon name='undo' /></Tool>
        <Tool $width={6} aria-label='Undo list'><Caret /></Tool>
        <Tool $width={18} aria-label='Redo'><Icon name='redo' /></Tool>
        <Tool $width={6} aria-label='Redo list'><Caret /></Tool>
        <Tool $width={14} aria-label='Customize'><Icon name='overflow' size={8} /></Tool>
        <Tool $blue><Icon name='plane' /> Share</Tool>
        <Title>
          <span>Autodesk AutoCAD 2025</span>
          <span>23022-MALL-CONCRETE DIMENSIONS.dwg</span>
        </Title>
        <Next />
        <Search aria-label='Search help' placeholder='Type a keyword or phrase' />
        <Tool $width={18} aria-label='Search'><Icon name='search' size={11} /></Tool>
        <Tool $width={75}><Icon name='user' size={11} /> Sign In<Caret $push /></Tool>
        <Tool $width={24} aria-label='Store'><Icon name='cart' size={11} /></Tool>
        <Tool $width={20} aria-label='Apps'><Icon name='apps' size={11} /><Caret /></Tool>
        <Divider />
        <Tool $width={24} aria-label='Help'><Icon name='help' size={12} /><Caret /></Tool>
        <WindowButtons>
          <Tool $width={16} aria-label='Minimize'><Icon name='minimize' size={10} /></Tool>
          <Tool $width={16} aria-label='Restore'><Icon name='restore' size={9} /></Tool>
          <Tool $width={16} aria-label='Close'><Icon name='close' size={10} /></Tool>
        </WindowButtons>
      </TitleBar>
    )
  }
}

class RibbonBar extends Component {
  render () {
    return (
      <>
        <RibbonTabs>
          {tabs.map((tab, i) => <RibbonTab key={tab} $active={i === 0}>{tab}</RibbonTab>)}
          <Featured aria-label='Minimize ribbon'><FeaturedBox /><Caret /></Featured>
        </RibbonTabs>
        <Ribbon>
          <Panel $width={148}>
            <Tools>
              <BigTool icon='line' label={['Line']} width={24} />
              <BigTool icon='polyline' label={['Polyline']} width={34} />
              <BigTool icon='circle' label={['Circle']} more width={32} />
              <BigTool icon='arc' label={['Arc']} more width={29} />
              <Columns $columns='1fr'>
                <SmallTool icon='rect' text={2} label=' ' more />
                <SmallTool icon='ellipse' text={2} label=' ' more />
                <SmallTool icon='hatch' text={2} label=' ' more />
              </Columns>
            </Tools>
            <PanelTitle>Draw <Caret $large /></PanelTitle>
          </Panel>
          <Panel $width={167}>
            <Tools>
              <Columns $columns='48px 47px 49px 16px' $left={2}>
                {modify.map(([icon, label, more]) => (
                  <SmallTool key={icon} icon={icon} label={label} more={more} text={more ? 23 : 0} />
                ))}
              </Columns>
            </Tools>
            <PanelTitle>Modify <Caret $large /></PanelTitle>
          </Panel>
          <Panel $width={126}>
            <Tools>
              <BigTool icon='text' label={['Text']} more width={32} />
              <BigTool icon='dimension' label={['Dimension']} width={40} />
              <Columns $columns='1fr' $left={2}>
                <SmallTool icon='linear' label='Linear' more text={28} />
                <SmallTool icon='leader' label='Leader' more text={28} />
                <SmallTool icon='table' label='Table' />
              </Columns>
            </Tools>
            <PanelTitle>Annotation <Caret $large /></PanelTitle>
          </Panel>
          <Panel $width={183}>
            <Tools>
              <BigTool icon='layers' label={['Layer', 'Properties']} width={43} />
              <Stack>
                <Combo>
                  <Icon name='bulb' size={11} />
                  <Icon name='sun' size={10} />
                  <Icon name='padlock' size={11} />
                  <Swatch />
                  <Select aria-label='Layer'><option>0</option></Select>
                  <Caret />
                </Combo>
                {layerRows.map(row => (
                  <IconRow key={row[5]}>
                    {row.slice(0, 4).map(icon => <SmallTool key={icon} icon={icon} />)}
                    <SmallTool icon={row[4]} label={row[5]} />
                  </IconRow>
                ))}
              </Stack>
            </Tools>
            <PanelTitle>Layers <Caret $large /></PanelTitle>
          </Panel>
          <Panel $width={134}>
            <Tools>
              <BigTool icon='insert' label={['Insert']} more width={29} />
              <BigTool icon='detect' label={['Detect']} width={25} />
              <Columns $columns='1fr' $left={1}>
                <SmallTool icon='create' label='Create' />
                <SmallTool icon='editBlock' label='Edit' />
                <SmallTool icon='attributes' label='Edit Attributes' more text={56} />
              </Columns>
            </Tools>
            <PanelTitle>Block <Caret $large /></PanelTitle>
          </Panel>
          <Panel $width={178}>
            <Tools>
              <BigTool icon='match' label={['Match', 'Properties']} width={43} />
              <Columns $columns='14px 1fr'>
                <Icon name='wheel' />
                <Combo><Swatch /><Select aria-label='Color'><option>ByLayer</option></Select><Caret /></Combo>
                <Icon name='weight' />
                <Combo><Rule /><Select aria-label='Lineweight'><option>ByLayer</option></Select><Caret /></Combo>
                <Icon name='linetype' />
                <Combo><Rule /><Select aria-label='Linetype'><option>ByLayer</option></Select><Caret /></Combo>
              </Columns>
            </Tools>
            <PanelTitle $indent={63}>
              Properties <Caret $large /><Launcher aria-label='Properties options'>»</Launcher>
            </PanelTitle>
          </Panel>
          <Panel $width={46}>
            <Tools>
              <BigTool icon='group' label={['Group']} width={28} />
              <Columns $columns='16px'>
                <SmallTool icon='ungroup' />
                <SmallTool icon='groupEdit' />
                <SmallTool icon='groupSelect' active />
              </Columns>
            </Tools>
            <PanelTitle>Groups <Caret $large /></PanelTitle>
          </Panel>
          <Panel $width={65}>
            <Tools>
              <BigTool icon='measure' label={['Measure']} more width={47} />
              <Columns $columns='16px'>
                <SmallTool icon='quickSelect' />
                <SmallTool icon='selectAll' />
                <SmallTool icon='calculator' />
              </Columns>
            </Tools>
            <PanelTitle>Utilities <Caret $large /></PanelTitle>
          </Panel>
          <Panel $width={60}>
            <Tools>
              <BigTool icon='paste' label={['Paste']} more width={36} />
              <Columns $columns='1fr'>
                <SmallTool icon='cut' more />
                <SmallTool icon='pages' more />
              </Columns>
            </Tools>
            <PanelTitle>Clipboard</PanelTitle>
          </Panel>
          <Panel $width={44} $last>
            <Tools>
              <BigTool icon='base' label={['Base']} more width={43} />
            </Tools>
            <PanelTitle $indent={5}>
              View <Caret $large /><Launcher aria-label='View options'>»</Launcher>
            </PanelTitle>
          </Panel>
        </Ribbon>
      </>
    )
  }
}

class ModelSpace extends Component {
  render () {
    return (
      <Space>
        <ViewLabel>[−][Top][2D Wireframe]</ViewLabel>
        <Plan left={323} kind='selected' />
        <Plan left={547} kind='plain' />
        <Plan left={761} kind='plain' />
        <Plan left={970} kind='red' />
        <Dashes />
        <Ucs width='54' height='56' viewBox='0 0 54 56'>
          <path d='M6.500 16V50.500H40M3.500 47.500h6v6h-6z' />
          <path d='M8 4l4 4 4-4M12 8v5M43 41l8 8M51 41l-8 8' />
        </Ucs>
        <Crosshair $vertical />
        <Crosshair />
        <Pointer width='9' height='9' viewBox='0 0 9 9' fill='#e8eaec'>
          <path d='M1 1l5 3-4 2zM4 4h3v4H4z' />
        </Pointer>
        <Tip>Ortho: 265203.2938 &lt; 0°</Tip>
        <SpaceButtons>
          <Tool $width={9} aria-label='Minimize drawing'><Icon name='minimizeBold' size={7} /></Tool>
          <Tool $width={9} aria-label='Restore drawing'><Icon name='restoreBold' size={7} /></Tool>
          <Tool $width={9} aria-label='Close drawing'><Icon name='closeBold' size={6} /></Tool>
        </SpaceButtons>
        <Compass>
          <svg width='92' height='92' viewBox='0 0 92 92' fontFamily='Liberation Sans' fontWeight='700' textAnchor='middle'>
            <circle cx='46' cy='46' r='37' fill='none' stroke='#4a4f5b' strokeWidth='8' />
            <path d='M28.500 28h35v36h-35z' fill='#bcbebf' />
            <path d='M35 35h21v22H35z' fill='#b0b4bd' />
            <text x='46' y='49' fontSize='8' fill='#444a58'>TOP</text>
            <g fontSize='14' fill='#b4b7bd'>
              <text x='46' y='12'>N</text>
              <text x='46' y='90'>S</text>
              <text x='84' y='51'>E</text>
              <text x='8' y='51'>W</text>
            </g>
          </svg>
          <Wcs>WCS</Wcs>
        </Compass>
        <NavBar>
          <svg width='22' height='148' viewBox='0 0 22 148' fill='none' stroke='#474c55'>
            <circle cx='17' cy='4' r='2' />
            <circle cx='11' cy='21' r='7' />
            <path d='M7 17h8v8H7zM10 35h3M5 48h4v-3h6v8c0 4-8 4-10 0z' />
            <path d='M4 62l11 12M15 62L4 74M10 83h3M11 90v14M4 97h14M7 93h8v8H7zM10 110h3' />
            <circle cx='15' cy='71' r='3' />
            <path d='M3 118h15M4 123h12v10H4zM8 125l4 3-4 3zM15 143h4' />
          </svg>
        </NavBar>
        <Banner>
          <h2>STR11- STR DWG FOR PT SLABS</h2>
          <p dir='rtl' lang='ar'>اخراج لوحات الأسقف بوست تنشن</p>
        </Banner>
        <Logo width='66' height='70' viewBox='0 0 66 70'>
          <path d='M20 1h18v3h-2v7H22V4h-2z' fill='#d2d2cc' />
          <path d='M1 36a28 28 0 0 1 56 0H46a17 17 0 0 0-34 0z' fill='#d2d2cc' />
          <path d='M1 35h11a17 17 0 0 0 34 0h11a28 28 0 0 1-56 0z' fill='#15737b' />
          <path d='M15 39c8 5 18 8 26 4 0 6 4 13 11 19 4 3 8 4 12 3-4 5-12 5-18 1-10-7-16-21-31-27z' fill='#d2d2cc' />
          <path d='M20 27l9-6v7l-9 5z' fill='#8fa1ae' />
          <path d='M29 26l10 6v6l-10-5z' fill='#8fa1ae' />
          <path d='M21 33l8 1v6l-8-2zM30 37l8 3v3l-8-1z' fill='#1f8d93' />
        </Logo>
        <Brand>QAROURA</Brand>
        <Command>
          <History>
            <span>Specify base point or [Displacement/mOde] &lt;Displacement&gt;:</span>
            <span>Specify second point or [Array] &lt;use first point as displacement&gt;:</span>
            <span>Specify second point or [Array/Exit/Undo] &lt;Exit&gt;:</span>
          </History>
          <Prompt>
            <Grip />
            <Icon name='close' size={8} />
            <Icon name='wrench' size={11} />
            <Field>
              <Caret $large />
              <b>COPY</b>
              <span>
                {' Specify second point or ['}
                <Option>Array</Option> <Option>Exit</Option> <Option>Undo</Option>
                {'] <Exit>:'}
              </span>
              <input aria-label='Command' />
              <Up />
            </Field>
          </Prompt>
        </Command>
      </Space>
    )
  }
}

const toggles = [
  ['grid'], ['dots'], ['caret', 14], ['ortho', 16, 1], ['polar'], ['caret', 11], ['iso'], ['caret', 11],
  ['track', 16, 1], ['snap', 16, 1], ['caret', 10], ['lines', 18], ['annoOn', 16, 1], ['annoAuto'], ['anno'],
  ['scale', 25], ['gear'], ['caret', 11], ['plus', 18], ['shapes', 18], ['cubes', 20], ['fullscreen', 20], ['menu']
]

export default class App extends Component {
  render () {
    return (
      <Page>
        <GlobalStyle />
        <Header />
        <RibbonBar />
        <FileTabs>
          <Tool $width={12} aria-label='Drawings'><Icon name='menu' /></Tool>
          <Slash />
          <FileTab>Start</FileTab>
          <Slash />
          <FileTab>updated mesh*</FileTab>
          <ActiveFile>
            <FileTab>23022-MALL-CONCRETE DIMENSIONS*</FileTab>
            <Tool $width={10} aria-label='Close tab'><Icon name='close' size={8} /></Tool>
          </ActiveFile>
          <Tool $width={12} aria-label='New tab'><Icon name='plus' size={11} /></Tool>
          <Slash />
        </FileTabs>
        <ModelSpace />
        <StatusBar>
          <Layouts>
            <Tool $width={11} aria-label='Layouts'><Icon name='menu' /></Tool>
            <LayoutTab $active>Model</LayoutTab>
            <LayoutTab>Layout1</LayoutTab>
            <Slash />
            <LayoutTab>Layout2</LayoutTab>
            <Slash />
            <Tool $width={12} aria-label='New layout'><Icon name='plus' size={11} /></Tool>
            <Slash />
          </Layouts>
          <Toggle $width={34}>MODEL</Toggle>
          {toggles.map(([name, width, on], i) => (
            <Toggle key={i} $width={width} $on={on} aria-label={name}>
              {name === 'caret' && <Caret $large />}
              {name === 'scale' && <>1:1&nbsp;<Caret $large /></>}
              {name !== 'caret' && name !== 'scale' && <Icon name={name} size={12} />}
            </Toggle>
          ))}
        </StatusBar>
      </Page>
    )
  }
}
